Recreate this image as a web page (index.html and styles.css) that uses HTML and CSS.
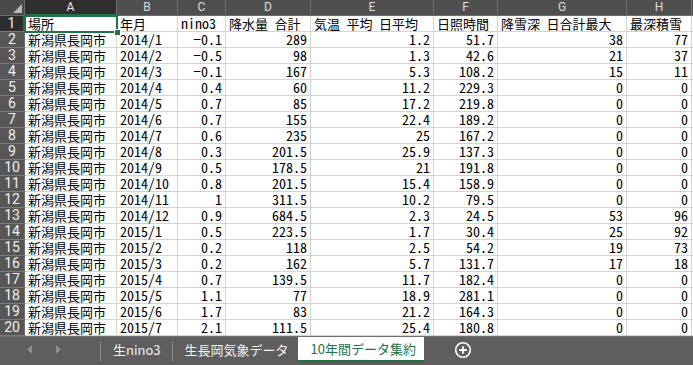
FILE: index.html
```html
<!DOCTYPE html>
<html lang="ja">
<head>
<meta charset="utf-8">
<title>10年間データ集約</title>
<link rel="stylesheet" href="styles.css">
</head>
<body>
<div class="app">
  <div class="sheet">
    <div class="corner"><svg width="9" height="9" viewBox="0 0 9 9"><polygon points="9,0 9,9 0,9" fill="#b8b8b8"/></svg></div>
    <div class="ch active">A</div><div class="ch">B</div><div class="ch">C</div><div class="ch">D</div><div class="ch">E</div><div class="ch">F</div><div class="ch">G</div><div class="ch">H</div><div class="ch last"></div>

    <div class="rh active">1</div><div class="c">場所</div><div class="c">年月</div><div class="c t">nino3</div><div class="c">降水量 合計</div><div class="c">気温 平均 日平均</div><div class="c">日照時間</div><div class="c">降雪深 日合計最大</div><div class="c">最深積雪</div><div class="c last"></div>

    <div class="rh">2</div><div class="c">新潟県長岡市</div><div class="c t">2014/1</div><div class="n">−0.1</div><div class="n">289</div><div class="n">1.2</div><div class="n">51.7</div><div class="n">38</div><div class="n">77</div><div class="c last"></div>
    <div class="rh">3</div><div class="c">新潟県長岡市</div><div class="c t">2014/2</div><div class="n">−0.5</div><div class="n">98</div><div class="n">1.3</div><div class="n">42.6</div><div class="n">21</div><div class="n">37</div><div class="c last"></div>
    <div class="rh">4</div><div class="c">新潟県長岡市</div><div class="c t">2014/3</div><div class="n">−0.1</div><div class="n">167</div><div class="n">5.3</div><div class="n">108.2</div><div class="n">15</div><div class="n">11</div><div class="c last"></div>
    <div class="rh">5</div><div class="c">新潟県長岡市</div><div class="c t">2014/4</div><div class="n">0.4</div><div class="n">60</div><div class="n">11.2</div><div class="n">229.3</div><div class="n">0</div><div class="n">0</div><div class="c last"></div>
    <div class="rh">6</div><div class="c">新潟県長岡市</div><div class="c t">2014/5</div><div class="n">0.7</div><div class="n">85</div><div class="n">17.2</div><div class="n">219.8</div><div class="n">0</div><div class="n">0</div><div class="c last"></div>
    <div class="rh">7</div><div class="c">新潟県長岡市</div><div class="c t">2014/6</div><div class="n">0.7</div><div class="n">155</div><div class="n">22.4</div><div class="n">189.2</div><div class="n">0</div><div class="n">0</div><div class="c last"></div>
    <div class="rh">8</div><div class="c">新潟県長岡市</div><div class="c t">2014/7</div><div class="n">0.6</div><div class="n">235</div><div class="n">25</div><div class="n">167.2</div><div class="n">0</div><div class="n">0</div><div class="c last"></div>
    <div class="rh">9</div><div class="c">新潟県長岡市</div><div class="c t">2014/8</div><div class="n">0.3</div><div class="n">201.5</div><div class="n">25.9</div><div class="n">137.3</div><div class="n">0</div><div class="n">0</div><div class="c last"></div>
    <div class="rh">10</div><div class="c">新潟県長岡市</div><div class="c t">2014/9</div><div class="n">0.5</div><div class="n">178.5</div><div class="n">21</div><div class="n">191.8</div><div class="n">0</div><div class="n">0</div><div class="c last"></div>
    <div class="rh">11</div><div class="c">新潟県長岡市</div><div class="c t">2014/10</div><div class="n">0.8</div><div class="n">201.5</div><div class="n">15.4</div><div class="n">158.9</div><div class="n">0</div><div class="n">0</div><div class="c last"></div>
    <div class="rh">12</div><div class="c">新潟県長岡市</div><div class="c t">2014/11</div><div class="n">1</div><div class="n">311.5</div><div class="n">10.2</div><div class="n">79.5</div><div class="n">0</div><div class="n">0</div><div class="c last"></div>
    <div class="rh">13</div><div class="c">新潟県長岡市</div><div class="c t">2014/12</div><div class="n">0.9</div><div class="n">684.5</div><div class="n">2.3</div><div class="n">24.5</div><div class="n">53</div><div class="n">96</div><div class="c last"></div>
    <div class="rh">14</div><div class="c">新潟県長岡市</div><div class="c t">2015/1</div><div class="n">0.5</div><div class="n">223.5</div><div class="n">1.7</div><div class="n">30.4</div><div class="n">25</div><div class="n">92</div><div class="c last"></div>
    <div class="rh">15</div><div class="c">新潟県長岡市</div><div class="c t">2015/2</div><div class="n">0.2</div><div class="n">118</div><div class="n">2.5</div><div class="n">54.2</div><div class="n">19</div><div class="n">73</div><div class="c last"></div>
    <div class="rh">16</div><div class="c">新潟県長岡市</div><div class="c t">2015/3</div><div class="n">0.2</div><div class="n">162</div><div class="n">5.7</div><div class="n">131.7</div><div class="n">17</div><div class="n">18</div><div class="c last"></div>
    <div class="rh">17</div><div class="c">新潟県長岡市</div><div class="c t">2015/4</div><div class="n">0.7</div><div class="n">139.5</div><div class="n">11.7</div><div class="n">182.4</div><div class="n">0</div><div class="n">0</div><div class="c last"></div>
    <div class="rh">18</div><div class="c">新潟県長岡市</div><div class="c t">2015/5</div><div class="n">1.1</div><div class="n">77</div><div class="n">18.9</div><div class="n">281.1</div><div class="n">0</div><div class="n">0</div><div class="c last"></div>
    <div class="rh">19</div><div class="c">新潟県長岡市</div><div class="c t">2015/6</div><div class="n">1.7</div><div class="n">83</div><div class="n">21.2</div><div class="n">164.3</div><div class="n">0</div><div class="n">0</div><div class="c last"></div>
    <div class="rh">20</div><div class="c">新潟県長岡市</div><div class="c t">2015/7</div><div class="n">2.1</div><div class="n">111.5</div><div class="n">25.4</div><div class="n">180.8</div><div class="n">0</div><div class="n">0</div><div class="c last"></div>

    <div class="selection"><span class="handle"></span></div>
  </div>

  <div class="tabbar">
    <div class="nav">
      <svg width="6" height="9" viewBox="0 0 6 9"><polygon points="5,0 5,9 0,4.5" fill="#8e8e8e"/></svg>
      <svg width="6" height="9" viewBox="0 0 6 9"><polygon points="1,0 1,9 6,4.5" fill="#8e8e8e"/></svg>
    </div>
    <div class="sep"></div>
    <div class="tab">生nino3</div>
    <div class="sep"></div>
    <div class="tab second">生長岡気象データ</div>
    <div class="tab current">10年間データ集約</div>
    <div class="add">
      <svg width="18" height="18" viewBox="0 0 18 18"><circle cx="9" cy="9" r="7.3" fill="none" stroke="#fff" stroke-width="1.6"/><path d="M9 5.2v7.6M5.2 9h7.6" stroke="#fff" stroke-width="1.8"/></svg>
    </div>
  </div>
</div>
</body>
</html>
```
FILE: styles.css
```css
html, body {
  margin: 0;
  padding: 0;
  background: #ffffff;
}

.app {
  width: 693px;
  height: 365px;
  overflow: hidden;
  display: flex;
  flex-direction: column;
  font-family: "Noto Sans CJK JP", "Noto Sans", sans-serif;
}

.sheet {
  position: relative;
  display: grid;
  grid-template-columns: 25px 92px 61px 48px 85px 123px 64px 129px 65px 1fr;
  grid-auto-rows: 16px;
}

.corner {
  background: #4a4a4a;
  border-right: 1px solid #6b6b6b;
  border-bottom: 1px solid #6b6b6b;
  box-sizing: border-box;
  display: flex;
  align-items: flex-end;
  justify-content: flex-end;
  padding: 0 2px 2px 0;
}

.ch {
  background: #4f4f4f;
  color: #dcdcdc;
  font-family: "Roboto", "Noto Sans", sans-serif;
  font-size: 12px;
  line-height: 15px;
  text-align: center;
  border-right: 1px solid #6e6e6e;
  border-bottom: 1px solid #6e6e6e;
  box-sizing: border-box;
}

.ch.active {
  background: #2f2f2f;
  color: #e8e8e8;
  border-bottom: 2px solid #217346;
}

.ch.last {
  border-right: none;
}

.rh {
  background: #575757;
  color: #f0f0f0;
  font-family: "Roboto", "Noto Sans", sans-serif;
  font-size: 14px;
  line-height: 15px;
  text-align: center;
  border-right: 1px solid #6e6e6e;
  border-bottom: 1px solid #7a7a7a;
  box-sizing: border-box;
}

.rh.active {
  background: #2d2d2d;
  border-right: 2px solid #217346;
}

.c, .n {
  color: #000;
  font-size: 13px;
  line-height: 15px;
  font-feature-settings: "hwid";
  white-space: nowrap;
  border-right: 1px solid #d4d4d4;
  border-bottom: 1px solid #d4d4d4;
  box-sizing: border-box;
}

.c {
  padding-left: 3px;
}

.c.t {
  font-size: 14px;
}

.n {
  text-align: right;
  padding-right: 3px;
  font-size: 14px;
}

.c.last {
  border-right: none;
}

.selection {
  position: absolute;
  left: 24px;
  top: 15px;
  width: 94px;
  height: 18px;
  border: 2px solid #217346;
  box-sizing: border-box;
  pointer-events: none;
}

.handle {
  position: absolute;
  right: -5px;
  bottom: -5px;
  width: 5px;
  height: 5px;
  background: #217346;
  border: 1px solid #ffffff;
}

.tabbar {
  flex: 1;
  display: flex;
  align-items: stretch;
  background: #5e5e5e;
  border-top: 1px solid #6f6f6f;
  box-sizing: border-box;
  padding-bottom: 3px;
  color: #f2f2f2;
  font-size: 13px;
}

.nav {
  width: 100px;
  display: flex;
  align-items: center;
  gap: 22px;
  padding-left: 27px;
  box-sizing: border-box;
}

.sep {
  width: 1px;
  background: #8a8a8a;
  margin: 4px 0 1px;
}

.tab {
  display: flex;
  align-items: center;
  padding: 0 11px 0 12px;
  white-space: nowrap;
}

.tab.second {
  padding-right: 9px;
}

.tab.current {
  background: #ffffff;
  color: #217346;
  border-bottom: 2px solid #217346;
  padding: 0 14px 0 13px;
  width: 126px;
  box-sizing: border-box;
}

.add {
  display: flex;
  align-items: center;
  padding-left: 30px;
}
```
